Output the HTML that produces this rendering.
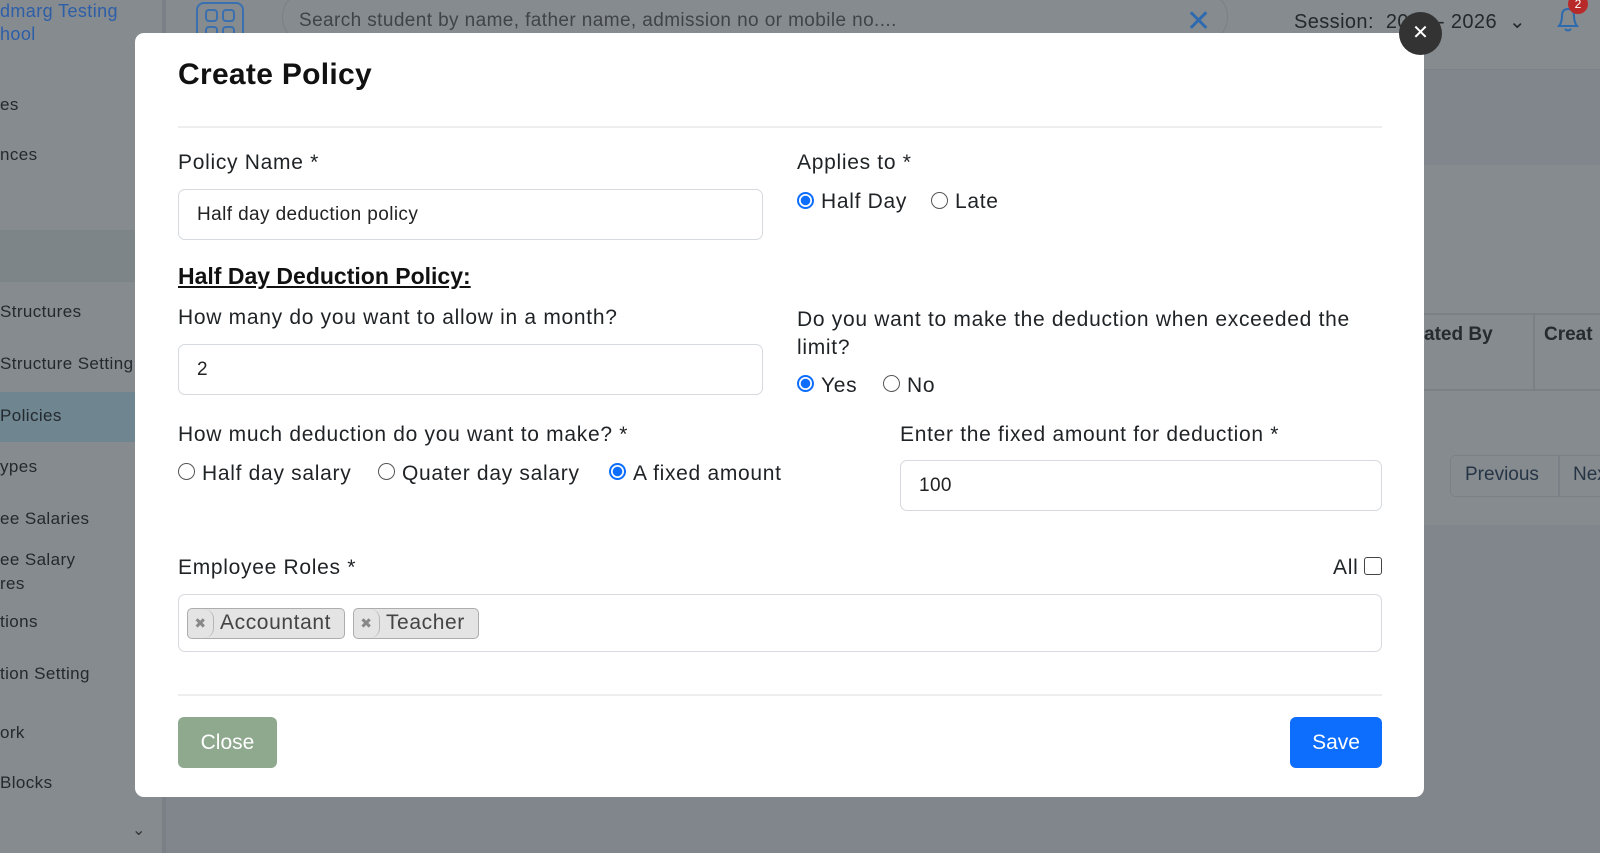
<!DOCTYPE html>
<html><head><meta charset="utf-8"><style>
*{box-sizing:border-box;margin:0;padding:0}
body{width:1600px;height:853px;overflow:hidden;background:#80868c;font-family:"Liberation Sans",sans-serif;position:relative;color:#212529}
.a{position:absolute;white-space:nowrap}
.sb{left:0;top:0;width:166px;height:853px;background:#858b8f;border-right:4px solid #7a8085}
.hdr{left:166px;top:0;width:1434px;height:70px;background:#858b8e;border-bottom:1px solid #7c8286}
.si{left:0;font-size:17px;color:#23292e;letter-spacing:.4px}
.m{left:135px;top:33px;width:1289px;height:764px;background:#fff;border-radius:9px}
.lbl{font-size:21px;color:#1f2326;letter-spacing:.7px}
.inp{border:1.5px solid #d6d9dd;border-radius:7px;background:#fff;font-size:19px;padding-left:18px;display:flex;align-items:center;color:#222;letter-spacing:.4px}
.rad{width:17px;height:17px;border-radius:50%;border:1.5px solid #555;background:#fff}
.rad.on{border:2px solid #0d6efd;background:radial-gradient(circle,#0d6efd 0 4.5px,#fff 5px)}
.tag{border:1.5px solid #adadad;background:#e4e4e4;border-radius:5px;height:31px;font-size:21px;color:#444;display:flex;align-items:center;letter-spacing:.6px}
.tag i{font-style:normal;font-size:14px;color:#888;width:26px;text-align:center;border-right:1px solid #b5b5b5;height:100%;display:flex;align-items:center;justify-content:center;margin-right:6px;border-radius:0 10px 10px 0}
</style></head><body>
<div class="a sb"></div>
<div class="a" style="left:0;top:0;font-size:18px;color:#2d5ea8;line-height:23px;letter-spacing:.4px">dmarg Testing<br>hool</div>
<div class="a" style="left:0;top:230px;width:166px;height:52px;background:#7e8589"></div>
<div class="a" style="left:0;top:392px;width:135px;height:50px;background:#6f8590"></div>
<div class="a si" style="top:95px">es</div>
<div class="a si" style="top:145px">nces</div>
<div class="a si" style="top:302px">Structures</div>
<div class="a si" style="top:354px">Structure Setting</div>
<div class="a si" style="top:406px">Policies</div>
<div class="a si" style="top:457px">ypes</div>
<div class="a si" style="top:509px">ee Salaries</div>
<div class="a si" style="top:548px;line-height:24px">ee Salary<br>res</div>
<div class="a si" style="top:612px">tions</div>
<div class="a si" style="top:664px">tion Setting</div>
<div class="a si" style="top:723px">ork</div>
<div class="a si" style="top:773px">Blocks</div>
<div class="a" style="left:132px;top:820px;font-size:16px;color:#333">&#8964;</div>
<div class="a hdr"></div>
<div class="a" style="left:196px;top:2px;width:48px;height:40px;border:2px solid #3a6fb0;border-radius:8px"></div>
<div class="a" style="left:205px;top:9px;width:13px;height:13px;border:2px solid #3a6fb0;border-radius:4px"></div>
<div class="a" style="left:222px;top:9px;width:13px;height:13px;border:2px solid #3a6fb0;border-radius:4px"></div>
<div class="a" style="left:205px;top:26px;width:13px;height:13px;border:2px solid #3a6fb0;border-radius:4px"></div>
<div class="a" style="left:222px;top:26px;width:13px;height:13px;border:2px solid #3a6fb0;border-radius:4px"></div>
<div class="a" style="left:282px;top:-10px;width:946px;height:54px;border:1.5px solid #7a8086;border-radius:27px"></div>
<div class="a" style="left:299px;top:10px;font-size:19px;color:#3f4448;letter-spacing:.4px">Search student by name, father name, admission no or mobile no....</div>
<div class="a" style="left:1186px;top:4px;font-size:30px;color:#2d6ab0">✕</div>
<div class="a" style="left:1294px;top:9px;font-size:20px;color:#23292e;letter-spacing:.4px">Session:&nbsp; 2025 - 2026 &nbsp;&#8964;</div>
<svg class="a" style="left:1554px;top:4px" width="28" height="30" viewBox="0 0 28 30"><path d="M5 22 Q8 18 8 12 Q8 5 14 5 Q20 5 20 12 Q20 18 23 22 Z M11 25 Q14 28 17 25" fill="none" stroke="#2d6ab0" stroke-width="2"/></svg>
<div class="a" style="left:1568px;top:-6px;width:20px;height:20px;border-radius:50%;background:#b82a2a;color:#fff;font-size:12px;text-align:center;line-height:20px">2</div>
<div class="a" style="left:1424px;top:165px;width:176px;height:360px;background:#868b8f"></div>
<div class="a" style="left:1424px;top:313px;width:176px;height:78px;border-top:2px solid #7a8085;border-bottom:2px solid #7a8085"></div>
<div class="a" style="left:1533px;top:313px;width:2px;height:78px;background:#7a8085"></div>
<div class="a" style="left:1424px;top:324px;font-size:19px;font-weight:bold;color:#262b30">ated By</div>
<div class="a" style="left:1544px;top:324px;font-size:19px;font-weight:bold;color:#262b30">Creat</div>
<div class="a" style="left:1450px;top:455px;width:170px;height:42px;border:1.5px solid #7a8085;border-radius:5px"></div>
<div class="a" style="left:1465px;top:464px;font-size:19px;color:#263545">Previous</div>
<div class="a" style="left:1558px;top:455px;width:1.5px;height:42px;background:#7a8085"></div>
<div class="a" style="left:1573px;top:464px;font-size:19px;color:#263545">Next</div>

<div class="a m"></div>
<div class="a" style="left:1399px;top:12px;width:43px;height:43px;border-radius:50%;background:#333;color:#fff;font-size:20px;text-align:center;line-height:43px">✕</div>
<div class="a" style="left:178px;top:58px;font-size:30px;font-weight:bold;color:#111;letter-spacing:.3px">Create Policy</div>
<div class="a" style="left:178px;top:126px;width:1204px;height:2px;background:#eeeeee"></div>

<div class="a lbl" style="left:178px;top:151px">Policy Name *</div>
<div class="a inp" style="left:178px;top:189px;width:585px;height:51px">Half day deduction policy</div>
<div class="a lbl" style="left:797px;top:151px">Applies to *</div>
<div class="a rad on" style="left:797px;top:192px"></div>
<div class="a lbl" style="left:821px;top:190px">Half Day</div>
<div class="a rad" style="left:931px;top:192px"></div>
<div class="a lbl" style="left:955px;top:190px">Late</div>

<div class="a" style="left:178px;top:263px;font-size:23px;font-weight:bold;text-decoration:underline;color:#111">Half Day Deduction Policy:</div>
<div class="a lbl" style="left:178px;top:306px">How many do you want to allow in a month?</div>
<div class="a inp" style="left:178px;top:344px;width:585px;height:51px">2</div>
<div class="a lbl" style="left:797px;top:306px;line-height:28px">Do you want to make the deduction when exceeded the<br>limit?</div>
<div class="a rad on" style="left:797px;top:375px"></div>
<div class="a lbl" style="left:821px;top:374px">Yes</div>
<div class="a rad" style="left:883px;top:375px"></div>
<div class="a lbl" style="left:907px;top:374px">No</div>

<div class="a lbl" style="left:178px;top:423px">How much deduction do you want to make? *</div>
<div class="a rad" style="left:178px;top:463px"></div>
<div class="a lbl" style="left:202px;top:462px">Half day salary</div>
<div class="a rad" style="left:378px;top:463px"></div>
<div class="a lbl" style="left:402px;top:462px">Quater day salary</div>
<div class="a rad on" style="left:609px;top:463px"></div>
<div class="a lbl" style="left:633px;top:462px">A fixed amount</div>
<div class="a lbl" style="left:900px;top:423px">Enter the fixed amount for deduction *</div>
<div class="a inp" style="left:900px;top:460px;width:482px;height:51px">100</div>

<div class="a lbl" style="left:178px;top:556px">Employee Roles *</div>
<div class="a lbl" style="left:1333px;top:556px">All</div>
<div class="a" style="left:1364px;top:557px;width:18px;height:18px;border:1.5px solid #444;border-radius:3px;background:#fff"></div>
<div class="a inp" style="left:178px;top:594px;width:1204px;height:58px;padding-left:8px;gap:8px">
<div class="tag"><i>✖</i>Accountant&nbsp;&nbsp;</div><div class="tag"><i>✖</i>Teacher&nbsp;&nbsp;</div></div>

<div class="a" style="left:178px;top:694px;width:1204px;height:1.5px;background:#eeeeee"></div>
<div class="a" style="left:178px;top:717px;width:99px;height:51px;background:#8fa98f;border-radius:6px;color:#fff;font-size:21px;text-align:center;line-height:51px">Close</div>
<div class="a" style="left:1290px;top:717px;width:92px;height:51px;background:#0d6efd;border-radius:6px;color:#fff;font-size:21px;text-align:center;line-height:51px">Save</div>
</body></html>
